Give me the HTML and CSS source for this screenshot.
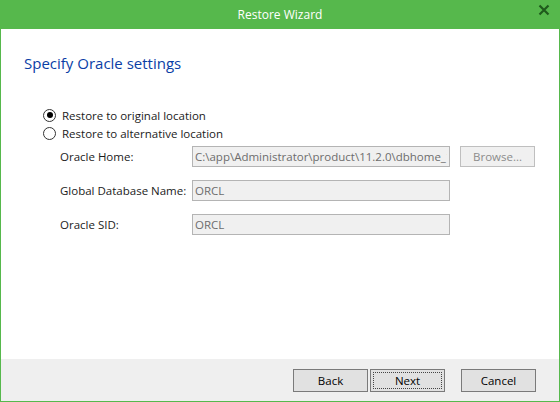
FILE: index.html
```html
<!DOCTYPE html>
<html>

<head>
    <title>Restore Wizard</title>
    <link rel="stylesheet" href="styles.css">
</head>

<body>
    <div class="window">
        <div class="titlebar">
            <span class="title">Restore Wizard</span>
            <span class="close">
                <svg width="12" height="12" viewBox="0 0 12 12">
                    <path d="M1.5 1.5 L10.5 10.5 M10.5 1.5 L1.5 10.5" stroke="#1f5a1c" stroke-width="2.2" fill="none" />
                </svg>
            </span>
        </div>

        <div class="frame">
            <div class="content">
                <h1>Specify Oracle settings</h1>

                <div class="options">
                    <label class="radio-row">
                        <input type="radio" name="target" checked>
                        <span>Restore to original location</span>
                    </label>
                    <label class="radio-row">
                        <input type="radio" name="target">
                        <span>Restore to alternative location</span>
                    </label>
                </div>

                <div class="fields">
                    <div class="field-row">
                        <label class="field-label">Oracle Home:</label>
                        <input class="field-input" type="text" value="C:\app\Administrator\product\11.2.0\dbhome_1" disabled>
                        <button class="btn browse" disabled>Browse...</button>
                    </div>
                    <div class="field-row">
                        <label class="field-label">Global Database Name:</label>
                        <input class="field-input" type="text" value="ORCL" disabled>
                    </div>
                    <div class="field-row">
                        <label class="field-label">Oracle SID:</label>
                        <input class="field-input" type="text" value="ORCL" disabled>
                    </div>
                </div>
            </div>

            <div class="footer">
                <button class="btn">Back</button>
                <button class="btn focused"><span>Next</span></button>
                <button class="btn cancel">Cancel</button>
            </div>
        </div>
    </div>
</body>

</html>
```

FILE: styles.css
```css
body {
    margin: 0;
    font-family: "Open Sans", "Noto Sans", sans-serif;
    font-size: 11.5px;
    color: #1b1b1b;
    background: #fff;
}

.window {
    width: 560px;
    height: 402px;
    display: flex;
    flex-direction: column;
}

.titlebar {
    position: relative;
    height: 29px;
    background: #56b84c;
    color: #fff;
    display: flex;
    align-items: center;
    justify-content: center;
    font-size: 12px;
}

.title {
    margin-top: -1px;
}

.close {
    position: absolute;
    right: 10px;
    top: 4px;
    line-height: 0;
}

.frame {
    flex: 1;
    display: flex;
    flex-direction: column;
    border: 1px solid #56b84c;
    border-top: none;
}

.content {
    flex: 1;
    padding: 23px 0 0 23px;
    background: #fff;
}

.content h1 {
    margin: 0;
    font-weight: normal;
    font-size: 15px;
    line-height: 22px;
    color: #0a3ea6;
}

.options {
    margin-top: 33px;
    display: flex;
    flex-direction: column;
    gap: 2px;
}

.radio-row {
    display: flex;
    align-items: center;
    height: 16px;
    padding-left: 19px;
}

.radio-row input {
    appearance: none;
    -webkit-appearance: none;
    width: 13px;
    height: 13px;
    margin: 0 6px 0 0;
    border: 1px solid #333;
    border-radius: 50%;
    background: #fff;
    box-sizing: border-box;
    position: relative;
}

.radio-row input:checked::after {
    content: "";
    position: absolute;
    left: 2.5px;
    top: 2.5px;
    width: 6px;
    height: 6px;
    border-radius: 50%;
    background: #000;
}

.fields {
    margin-top: 5px;
    padding-left: 36px;
    display: flex;
    flex-direction: column;
    gap: 13px;
}

.field-row {
    display: flex;
    align-items: center;
    height: 21px;
}

.field-label {
    width: 132px;
}

.field-input {
    width: 258px;
    height: 21px;
    box-sizing: border-box;
    padding: 0 2px;
    border: 1px solid #b4b4b4;
    background: #f0f0f0;
    color: #6d6d6d;
    font-family: inherit;
    font-size: 11.5px;
}

.btn {
    width: 75px;
    height: 23px;
    box-sizing: border-box;
    border: 1px solid #7a7a7a;
    background: #e1e1e1;
    color: #000;
    font-family: inherit;
    font-size: 11.5px;
    padding: 0;
}

.browse {
    margin-left: 10px;
    height: 21px;
    border-color: #bfbfbf;
    background: #f0f0f0;
    color: #8c8c8c;
}

.footer {
    height: 42px;
    background: #efefef;
    display: flex;
    justify-content: flex-end;
    padding: 10px 23px 0 0;
    box-sizing: border-box;
    gap: 2px;
}

.focused {
    padding: 2px;
}

.focused span {
    display: flex;
    align-items: center;
    justify-content: center;
    height: 100%;
    border: 1px dotted #444;
    box-sizing: border-box;
}

.cancel {
    margin-left: 14px;
}
```
